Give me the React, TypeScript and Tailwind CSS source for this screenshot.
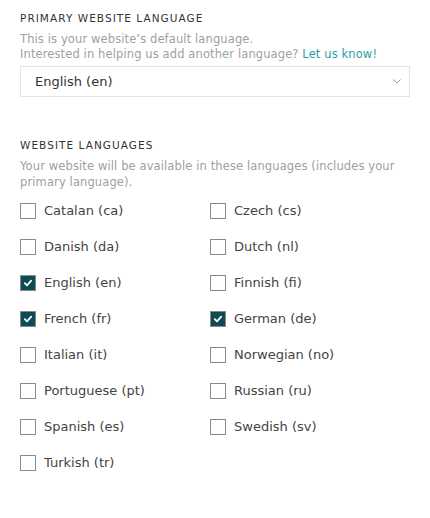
import React from "react";

const left = [
  ["Catalan (ca)", false],
  ["Danish (da)", false],
  ["English (en)", true],
  ["French (fr)", true],
  ["Italian (it)", false],
  ["Portuguese (pt)", false],
  ["Spanish (es)", false],
  ["Turkish (tr)", false],
] as const;
const right = [
  ["Czech (cs)", false],
  ["Dutch (nl)", false],
  ["Finnish (fi)", false],
  ["German (de)", true],
  ["Norwegian (no)", false],
  ["Russian (ru)", false],
  ["Swedish (sv)", false],
] as const;

function Box({ label, checked }: { label: string; checked: boolean }) {
  return (
    <div className="flex items-center h-[36px]">
      <div
        className={
          "w-[16px] h-[16px] border border-[#8a8a8a] flex items-center justify-center " +
          (checked ? "bg-[#0d4c52]" : "bg-white")
        }
      >
        {checked && (
          <svg width="10" height="10" viewBox="0 0 10 10">
            <path d="M1.8 5.2 L4 7.4 L8.2 2.6" fill="none" stroke="white" strokeWidth="1.8" strokeLinecap="round" strokeLinejoin="round" />
          </svg>
        )}
      </div>
      <span className="ml-[8px] text-[13px] text-[#444]">{label}</span>
    </div>
  );
}

export default function App() {
  const font = { fontFamily: "'DejaVu Sans', sans-serif" };
  return (
    <div className="w-[430px] h-[518px] bg-white px-[20px] pt-[11px]" style={font}>
      <div className="text-[10.5px] tracking-[0.1em] text-[#333] leading-[14px]">PRIMARY WEBSITE LANGUAGE</div>
      <div className="mt-[7px] text-[11.5px] leading-[15px] text-[#a0a0a0] tracking-[0.01em]">
        <div>This is your website’s default language.</div>
        <div>
          Interested in helping us add another language? <span className="text-[#2b9ea3]">Let us know!</span>
        </div>
      </div>
      <div className="mt-[4px] w-[390px] h-[31px] border border-[#e3e3e3] flex items-center justify-between pl-[14px] pr-[8px]">
        <span className="text-[13px] text-[#333]">English (en)</span>
        <svg width="8" height="5" viewBox="0 0 8 5">
          <path d="M0.5 0.5 L4 4 L7.5 0.5" fill="none" stroke="#999" strokeWidth="1" />
        </svg>
      </div>
      <div className="mt-[41px] text-[10.5px] tracking-[0.1em] text-[#333] leading-[14px]">WEBSITE LANGUAGES</div>
      <div className="mt-[6px] text-[11.5px] leading-[16px] text-[#a0a0a0] tracking-[0.01em]">
        <div>Your website will be available in these languages (includes your</div>
        <div>primary language).</div>
      </div>
      <div className="mt-[3px] grid grid-cols-2 w-[380px]">
        <div className="flex flex-col">
          {left.map(([l, c]) => (
            <Box key={l} label={l} checked={c} />
          ))}
        </div>
        <div className="flex flex-col">
          {right.map(([l, c]) => (
            <Box key={l} label={l} checked={c} />
          ))}
        </div>
      </div>
    </div>
  );
}
